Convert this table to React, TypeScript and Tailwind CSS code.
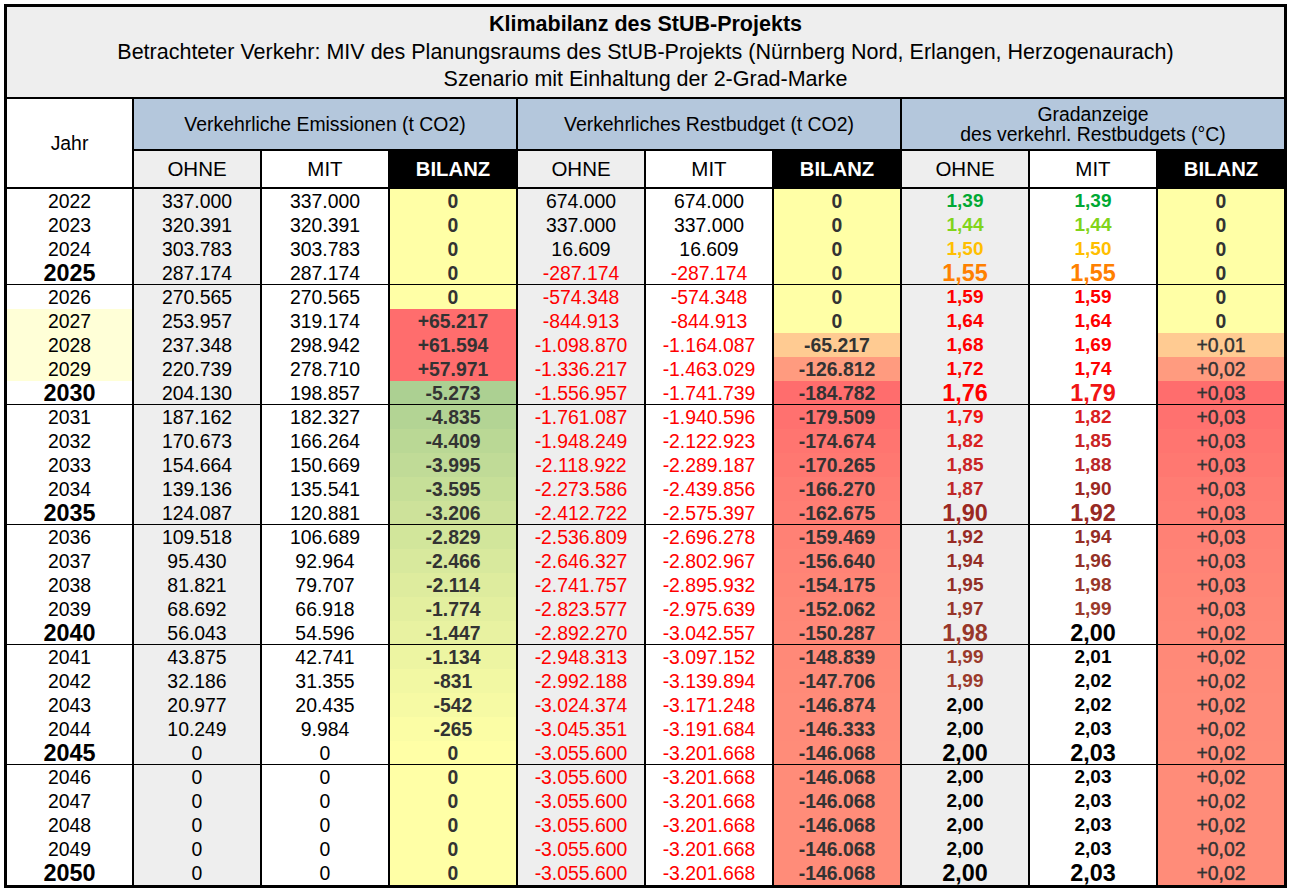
import React from "react";

type Row = [number, string, string, string, string, string, string, string, string, string];

const rows: Row[] = [
  [2022, "337.000", "337.000", "0", "674.000", "674.000", "0", "1,39", "1,39", "0"],
  [2023, "320.391", "320.391", "0", "337.000", "337.000", "0", "1,44", "1,44", "0"],
  [2024, "303.783", "303.783", "0", "16.609", "16.609", "0", "1,50", "1,50", "0"],
  [2025, "287.174", "287.174", "0", "-287.174", "-287.174", "0", "1,55", "1,55", "0"],
  [2026, "270.565", "270.565", "0", "-574.348", "-574.348", "0", "1,59", "1,59", "0"],
  [2027, "253.957", "319.174", "+65.217", "-844.913", "-844.913", "0", "1,64", "1,64", "0"],
  [2028, "237.348", "298.942", "+61.594", "-1.098.870", "-1.164.087", "-65.217", "1,68", "1,69", "+0,01"],
  [2029, "220.739", "278.710", "+57.971", "-1.336.217", "-1.463.029", "-126.812", "1,72", "1,74", "+0,02"],
  [2030, "204.130", "198.857", "-5.273", "-1.556.957", "-1.741.739", "-184.782", "1,76", "1,79", "+0,03"],
  [2031, "187.162", "182.327", "-4.835", "-1.761.087", "-1.940.596", "-179.509", "1,79", "1,82", "+0,03"],
  [2032, "170.673", "166.264", "-4.409", "-1.948.249", "-2.122.923", "-174.674", "1,82", "1,85", "+0,03"],
  [2033, "154.664", "150.669", "-3.995", "-2.118.922", "-2.289.187", "-170.265", "1,85", "1,88", "+0,03"],
  [2034, "139.136", "135.541", "-3.595", "-2.273.586", "-2.439.856", "-166.270", "1,87", "1,90", "+0,03"],
  [2035, "124.087", "120.881", "-3.206", "-2.412.722", "-2.575.397", "-162.675", "1,90", "1,92", "+0,03"],
  [2036, "109.518", "106.689", "-2.829", "-2.536.809", "-2.696.278", "-159.469", "1,92", "1,94", "+0,03"],
  [2037, "95.430", "92.964", "-2.466", "-2.646.327", "-2.802.967", "-156.640", "1,94", "1,96", "+0,03"],
  [2038, "81.821", "79.707", "-2.114", "-2.741.757", "-2.895.932", "-154.175", "1,95", "1,98", "+0,03"],
  [2039, "68.692", "66.918", "-1.774", "-2.823.577", "-2.975.639", "-152.062", "1,97", "1,99", "+0,03"],
  [2040, "56.043", "54.596", "-1.447", "-2.892.270", "-3.042.557", "-150.287", "1,98", "2,00", "+0,02"],
  [2041, "43.875", "42.741", "-1.134", "-2.948.313", "-3.097.152", "-148.839", "1,99", "2,01", "+0,02"],
  [2042, "32.186", "31.355", "-831", "-2.992.188", "-3.139.894", "-147.706", "1,99", "2,02", "+0,02"],
  [2043, "20.977", "20.435", "-542", "-3.024.374", "-3.171.248", "-146.874", "2,00", "2,02", "+0,02"],
  [2044, "10.249", "9.984", "-265", "-3.045.351", "-3.191.684", "-146.333", "2,00", "2,03", "+0,02"],
  [2045, "0", "0", "0", "-3.055.600", "-3.201.668", "-146.068", "2,00", "2,03", "+0,02"],
  [2046, "0", "0", "0", "-3.055.600", "-3.201.668", "-146.068", "2,00", "2,03", "+0,02"],
  [2047, "0", "0", "0", "-3.055.600", "-3.201.668", "-146.068", "2,00", "2,03", "+0,02"],
  [2048, "0", "0", "0", "-3.055.600", "-3.201.668", "-146.068", "2,00", "2,03", "+0,02"],
  [2049, "0", "0", "0", "-3.055.600", "-3.201.668", "-146.068", "2,00", "2,03", "+0,02"],
  [2050, "0", "0", "0", "-3.055.600", "-3.201.668", "-146.068", "2,00", "2,03", "+0,02"],
];

const BIG = new Set([2025, 2030, 2035, 2040, 2045, 2050]);
const SEP = new Set([2025, 2030, 2035, 2040, 2045]);
const LIGHT_YEAR = new Set([2027, 2028, 2029]);

const parseDe = (s: string) => parseFloat(s.replace(/\./g, "").replace(",", "."));

const YEL = [255, 255, 166];
const RED = [255, 109, 109];
const GRN = [172, 208, 146];

const mix = (a: number[], b: number[], t: number) =>
  `rgb(${a.map((v, i) => Math.round(v + (b[i] - v) * t)).join(",")})`;

const emBg = (v: number) => {
  if (v > 0) return "rgb(255,109,109)";
  if (v === 0) return mix(YEL, YEL, 0);
  return mix(YEL, GRN, Math.min(1, -v / 5273));
};

const rbBg = (v: number) => mix(YEL, RED, Math.min(1, -v / 184782));

const gradStops: [number, number[]][] = [
  [1.76, [255, 0, 0]],
  [1.79, [240, 20, 20]],
  [1.82, [217, 32, 32]],
  [1.85, [201, 36, 36]],
  [1.88, [184, 40, 40]],
  [1.9, [155, 40, 34]],
  [1.95, [146, 46, 38]],
  [1.99, [154, 58, 43]],
];

const gradColor = (v: number) => {
  if (v <= 1.39) return "#00a933";
  if (v <= 1.44) return "#81d41a";
  if (v <= 1.5) return "#ffbf00";
  if (v <= 1.55) return "#ff8000";
  if (v <= 1.76) return "#ff0000";
  if (v >= 2.0) return "#000000";
  for (let i = 0; i < gradStops.length - 1; i++) {
    const [a, ca] = gradStops[i];
    const [b, cb] = gradStops[i + 1];
    if (v >= a && v <= b) return mix(ca, cb, (v - a) / (b - a));
  }
  return "rgb(154,58,43)";
};

function DataRow({ r }: { r: Row }) {
  const [year, eO, eM, eB, rO, rM, rB, gO, gM, gB] = r;
  const big = BIG.has(year);
  const sep = SEP.has(year);
  const rowCls = sep ? "border-b border-black" : "";
  const cell = "flex items-center justify-center border-r-2 border-black h-full min-h-0 overflow-visible";
  const rbVal = parseDe(rB);
  const rbColor = rbBg(rbVal);
  const gradCls = big ? "text-[23.4px] font-bold leading-[20px]" : "text-[19px] font-bold";
  return (
    <div
      className={`grid grid-cols-[127px_repeat(8,128px)_126px] grid-rows-[100%] h-[24px] leading-[22px] ${rowCls}`}
    >
      <div className={`${cell} ${LIGHT_YEAR.has(year) ? "bg-[#ffffd7]" : "bg-white"}`}>
        <span className={big ? "text-[23.4px] font-bold leading-[20px]" : ""}>{year}</span>
      </div>
      <div className={`${cell} bg-[#eeeeee]`}>{eO}</div>
      <div className={`${cell} bg-white`}>{eM}</div>
      <div className={`${cell} font-bold text-[#333333]`} style={{ backgroundColor: emBg(parseDe(eB)) }}>
        {eB}
      </div>
      <div className={`${cell} bg-[#eeeeee] ${rO.startsWith("-") ? "text-[#ff0000]" : ""}`}>{rO}</div>
      <div className={`${cell} bg-white ${rM.startsWith("-") ? "text-[#ff0000]" : ""}`}>{rM}</div>
      <div className={`${cell} font-bold text-[#333333]`} style={{ backgroundColor: rbColor }}>
        {rB}
      </div>
      <div className={`${cell} bg-[#eeeeee]`}>
        <span className={gradCls} style={{ color: gradColor(parseDe(gO)) }}>
          {gO}
        </span>
      </div>
      <div className={`${cell} bg-white`}>
        <span className={gradCls} style={{ color: gradColor(parseDe(gM)) }}>
          {gM}
        </span>
      </div>
      <div
        className={`flex items-center justify-center h-full min-h-0 text-[#333333] ${
          gB === "0" ? "font-bold" : "[-webkit-text-stroke:0.4px_#333333]"
        }`}
        style={{ backgroundColor: rbColor }}
      >
        {gB}
      </div>
    </div>
  );
}

export default function App() {
  return (
    <div className="min-h-screen bg-white pl-[4px] pt-[4px] font-['Liberation_Sans',Arial,sans-serif] text-black text-[19.4px]">
      <div className="w-[1283px] border-[3px] border-black">
        <div className="h-[92px] border-b-2 border-black bg-[#eeeeee] flex flex-col items-center pt-[4px] text-[21.5px] leading-[27.5px]">
          <div className="font-bold">Klimabilanz des StUB-Projekts</div>
          <div>Betrachteter Verkehr: MIV des Planungsraums des StUB-Projekts (Nürnberg Nord, Erlangen, Herzogenaurach)</div>
          <div>Szenario mit Einhaltung der 2-Grad-Marke</div>
        </div>
        <div className="grid grid-cols-[127px_repeat(8,128px)_126px] grid-rows-[52px_38px] leading-[22px]">
          <div className="row-span-2 flex items-center justify-center border-r-2 border-b-2 border-black bg-white">
            Jahr
          </div>
          <div className="col-span-3 flex items-center justify-center border-r-2 border-b-2 border-black bg-[#b4c7dc]">
            Verkehrliche Emissionen (t CO2)
          </div>
          <div className="col-span-3 flex items-center justify-center border-r-2 border-b-2 border-black bg-[#b4c7dc]">
            Verkehrliches Restbudget (t CO2)
          </div>
          <div className="col-span-3 flex flex-col items-center justify-center border-b-2 border-black bg-[#b4c7dc] leading-[20px]">
            <div>Gradanzeige</div>
            <div>des verkehrl. Restbudgets (°C)</div>
          </div>
          {[0, 1, 2].map((g) => (
            <React.Fragment key={g}>
              <div className="flex items-center justify-center border-r-2 border-b-2 border-black bg-[#eeeeee] text-[20.5px]">
                OHNE
              </div>
              <div className="flex items-center justify-center border-r-2 border-b-2 border-black bg-white text-[20.5px]">
                MIT
              </div>
              <div
                className={`flex items-center justify-center border-b-2 border-black bg-black text-white font-bold text-[20.3px] ${
                  g < 2 ? "border-r-2" : ""
                }`}
              >
                BILANZ
              </div>
            </React.Fragment>
          ))}
        </div>
        {rows.map((r) => (
          <DataRow key={r[0]} r={r} />
        ))}
      </div>
    </div>
  );
}
